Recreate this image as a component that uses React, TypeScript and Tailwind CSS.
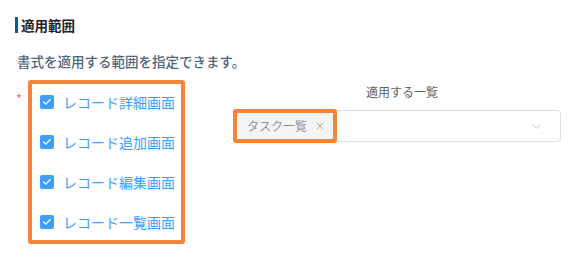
import { Check, ChevronDown, X } from "lucide-react";

const screens = ["レコード詳細画面", "レコード追加画面", "レコード編集画面", "レコード一覧画面"];

const jp = { fontFamily: '"Noto Sans CJK JP", "Noto Sans", sans-serif' };

export default function App() {
  return (
    <div className="w-[585px] h-[268px] bg-white overflow-hidden" style={jp}>
      {/* 見出し */}
      <div className="flex items-center pt-[17px] pl-[15px]">
        <div className="w-[3px] h-[16px] bg-[#0a5c94]" />
        <span className="ml-[3px] text-[13.5px] leading-[16px] font-bold text-[#222]">適用範囲</span>
      </div>

      <p className="mt-[19px] pl-[17px] text-[13.5px] leading-[18px] font-medium text-[#54657a]">
        書式を適用する範囲を指定できます。
      </p>

      <div className="flex mt-[10px]">
        {/* チェックボックス */}
        <div className="flex items-start pl-[16px]">
          <span className="mt-[13px] w-[12px] text-[13px] leading-[12px] text-[#f56c6c]">*</span>
          <div className="flex flex-col gap-[20px] w-[157px] border-4 border-[#f5843b] rounded-[3px] pl-[8px] pt-[8px] pb-[8px]">
            {screens.map(s => (
              <label key={s} className="flex items-center gap-[9px] h-[20px]">
                <span className="w-[14px] h-[14px] rounded-[2px] bg-[#409eff] flex items-center justify-center">
                  <Check size={10} strokeWidth={3} className="text-white" />
                </span>
                <span className="text-[14px] leading-[20px] text-[#409eff]">{s}</span>
              </label>
            ))}
          </div>
        </div>

        {/* 一覧の選択 */}
        <div className="ml-[48px] w-[328px] flex flex-col items-center">
          <span className="mt-[4px] ml-[10px] text-[12px] leading-[16px] text-[#606266]">適用する一覧</span>
          <div className="mt-[10px] w-full h-[32px] flex items-center border border-[#dcdfe6] rounded-[4px]">
            <div className="-ml-[1px] h-[34px] flex items-center border-4 border-[#f5843b] rounded-[3px] bg-[#f4f4f5] pl-[10px] pr-[8px]">
              <span className="text-[12px] leading-[16px] text-[#909399]">タスク一覧</span>
              <X size={10} strokeWidth={2} className="ml-[8px] text-[#909399]" />
            </div>
            <ChevronDown size={15} strokeWidth={1.5} className="ml-auto mr-[16px] text-[#bcc6c6]" />
          </div>
        </div>
      </div>
    </div>
  );
}
